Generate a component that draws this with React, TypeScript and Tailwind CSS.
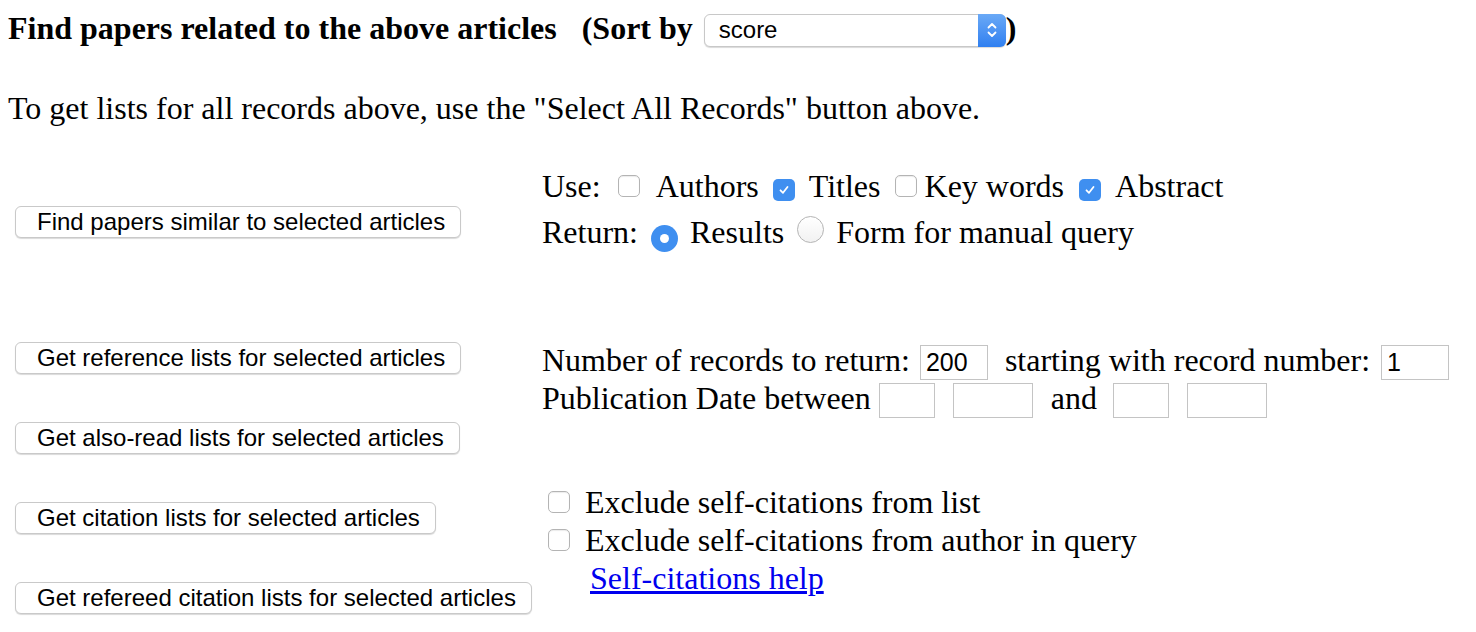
import { useState } from "react";

const serif = { fontFamily: '"Liberation Serif", "Times New Roman", serif' };

function Btn({ label }: { label: string }) {
  return (
    <button className="h-8 self-start rounded-[6px] border border-[#c9c9c9] bg-white pl-[21px] pr-[15px] font-['Liberation_Sans',Arial,sans-serif] text-[24px] leading-none text-black shadow-[0_1px_1px_rgba(0,0,0,0.15)]">
      {label}
    </button>
  );
}

function Check({ checked, onChange }: { checked: boolean; onChange: () => void }) {
  return (
    <span
      onClick={onChange}
      className={`inline-flex h-[22px] w-[22px] shrink-0 cursor-pointer items-center justify-center rounded-[5px] ${
        checked ? "bg-[#3f8ff0]" : "border border-[#b4b4b4] bg-white shadow-[inset_0_1px_1px_rgba(0,0,0,0.08)]"
      }`}
    >
      {checked && (
        <svg width="14" height="14" viewBox="0 0 14 14">
          <path d="M3.5 7.3 L6 9.8 L10.5 4" fill="none" stroke="white" strokeWidth="1.8" strokeLinecap="round" strokeLinejoin="round" />
        </svg>
      )}
    </span>
  );
}

function Radio({ on, onClick }: { on: boolean; onClick: () => void }) {
  return (
    <span
      onClick={onClick}
      className={`inline-flex h-[27px] w-[27px] shrink-0 cursor-pointer items-center justify-center rounded-full ${
        on ? "bg-[#3f8ff0]" : "border border-[#b4b4b4] bg-gradient-to-b from-white to-[#f2f2f2]"
      }`}
    >
      {on && <span className="h-[9px] w-[9px] rounded-full bg-white" />}
    </span>
  );
}

function Field({ w, value }: { w: string; value?: string }) {
  return (
    <input
      defaultValue={value}
      className={`${w} h-[35px] border border-[#c4c4c4] bg-white px-[5px] font-['Liberation_Sans',Arial,sans-serif] text-[25px] text-black outline-none`}
    />
  );
}

export default function App() {
  const [use, setUse] = useState({ authors: false, titles: true, keywords: false, abstract: true });
  const [ret, setRet] = useState("results");
  const [ex1, setEx1] = useState(false);
  const [ex2, setEx2] = useState(false);

  return (
    <div className="min-h-screen bg-white text-black" style={serif}>
      {/* heading */}
      <div className="flex h-[56px] items-center pl-2 text-[32px] font-bold">
        <span>Find papers related to the above articles</span>
        <span className="ml-[25px]">(Sort by</span>
        <div className="relative ml-[11px] mt-[4px] flex h-[33px] w-[302px] items-center rounded-[6px] border border-[#c8c8c8] bg-white pl-[14px] font-['Liberation_Sans',Arial,sans-serif] text-[24px] font-normal shadow-[0_1px_1px_rgba(0,0,0,0.15)]">
          score
          <span className="absolute -right-px -top-px flex h-[33px] w-[28px] flex-col items-center justify-center rounded-r-[6px] bg-gradient-to-b from-[#6aa9f6] to-[#2f7ff0]">
            <svg width="12" height="20" viewBox="0 0 12 20">
              <path d="M2.5 7.5 L6 4 L9.5 7.5 M2.5 12.5 L6 16 L9.5 12.5" fill="none" stroke="white" strokeWidth="1.8" strokeLinecap="round" strokeLinejoin="round" />
            </svg>
          </span>
        </div>
        <span className="font-bold">)</span>
      </div>

      <p className="mt-[33px] pl-2 text-[32px] leading-[38px]">
        To get lists for all records above, use the "Select All Records" button above.
      </p>

      <div className="mt-[36px] flex">
        {/* left column of buttons */}
        <div className="flex w-[542px] shrink-0 flex-col pl-[15px] pt-[43px]">
          <Btn label="Find papers similar to selected articles" />
          <div className="h-[104px]" />
          <Btn label="Get reference lists for selected articles" />
          <div className="h-12" />
          <Btn label="Get also-read lists for selected articles" />
          <div className="h-12" />
          <Btn label="Get citation lists for selected articles" />
          <div className="h-12" />
          <Btn label="Get refereed citation lists for selected articles" />
        </div>

        {/* right column */}
        <div className="flex flex-col text-[32px]">
          <div className="flex h-[46px] items-center whitespace-pre">
            <span>Use:</span>
            <span className="ml-[17px]"><Check checked={use.authors} onChange={() => setUse({ ...use, authors: !use.authors })} /></span>
            <span className="ml-[16px]">Authors</span>
            <span className="ml-[14px]"><Check checked={use.titles} onChange={() => setUse({ ...use, titles: !use.titles })} /></span>
            <span className="ml-[14px]">Titles</span>
            <span className="ml-[14px]"><Check checked={use.keywords} onChange={() => setUse({ ...use, keywords: !use.keywords })} /></span>
            <span className="ml-[8px]">Key words</span>
            <span className="ml-[15px]"><Check checked={use.abstract} onChange={() => setUse({ ...use, abstract: !use.abstract })} /></span>
            <span className="ml-[14px]">Abstract</span>
          </div>
          <div className="flex h-[46px] items-center whitespace-pre">
            <span>Return:</span>
            <span className="ml-[13px]"><Radio on={ret === "results"} onClick={() => setRet("results")} /></span>
            <span className="ml-[12px]">Results</span>
            <span className="ml-[13px]"><Radio on={ret === "form"} onClick={() => setRet("form")} /></span>
            <span className="ml-[12px]">Form for manual query</span>
          </div>

          <div className="mt-[86px] flex h-[38px] items-center whitespace-pre">
            <span>Number of records to return:</span>
            <span className="ml-[10px]"><Field w="w-[68px]" value="200" /></span>
            <span className="ml-[17px]">starting with record number:</span>
            <span className="ml-[11px]"><Field w="w-[68px]" value="1" /></span>
          </div>
          <div className="flex h-[38px] items-center whitespace-pre">
            <span>Publication Date between</span>
            <span className="ml-[8px]"><Field w="w-[56px]" /></span>
            <span className="ml-[18px]"><Field w="w-[80px]" /></span>
            <span className="ml-[18px]">and</span>
            <span className="ml-[16px]"><Field w="w-[56px]" /></span>
            <span className="ml-[18px]"><Field w="w-[80px]" /></span>
          </div>

          <div className="mt-[66px] flex h-[38px] items-center pl-[6px]">
            <Check checked={ex1} onChange={() => setEx1(!ex1)} />
            <span className="ml-[15px]">Exclude self-citations from list</span>
          </div>
          <div className="flex h-[38px] items-center pl-[6px]">
            <Check checked={ex2} onChange={() => setEx2(!ex2)} />
            <span className="ml-[15px]">Exclude self-citations from author in query</span>
          </div>
          <div className="flex h-[38px] items-center pl-[48px]">
            <a href="#" className="text-[#0000ee] underline">Self-citations help</a>
          </div>
        </div>
      </div>
    </div>
  );
}
